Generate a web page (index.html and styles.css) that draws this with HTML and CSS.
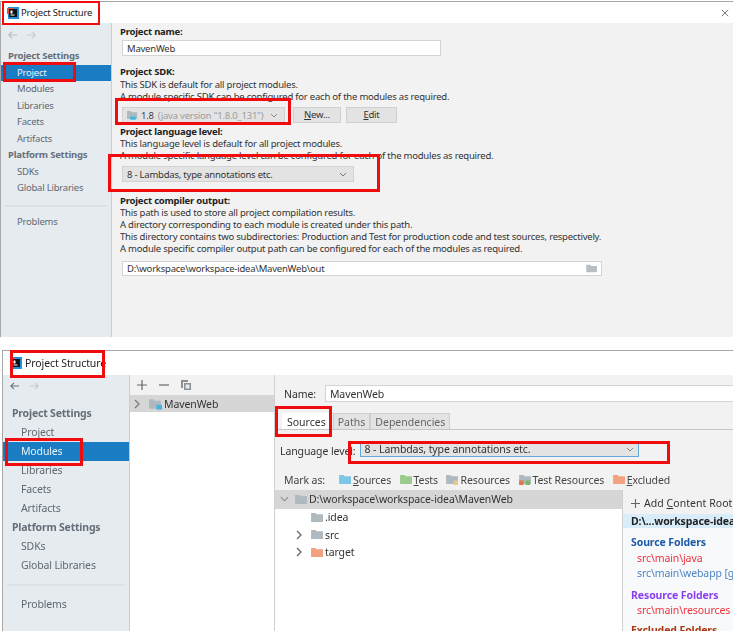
FILE: index.html
```html
<!DOCTYPE html>
<html lang="en">
<head>
<meta charset="utf-8">
<title>Project Structure</title>
<link rel="stylesheet" href="styles.css">
</head>
<body>
<div class="page">
  <section class="win win-a">
    <header class="titlebar">
      <svg class="logo" viewBox="0 0 12 12"><rect x="1" y="0" width="11" height="12" fill="#1f8fe0"/><rect x="0" y="1" width="6" height="6" fill="#e8503a"/><rect x="2" y="2" width="8" height="8" fill="#111"/><rect x="3.5" y="7.5" width="4" height="1" fill="#fff"/><rect x="3.5" y="3.5" width="2" height="3" fill="#fff"/></svg>
      <span class="title">Project Structure</span>
      <svg class="close" viewBox="0 0 10 10"><path d="M1 1l8 8M9 1l-8 8" stroke="#555" stroke-width="1" fill="none"/></svg>
    </header>
    <div class="body">
      <nav class="side">
        <div class="arrows">
          <svg viewBox="0 0 12 10"><path d="M11 5H2M5.500 1.500L2 5l3.500 3.500" stroke="#b9bec4" stroke-width="1.300" fill="none"/></svg>
          <svg viewBox="0 0 12 10"><path d="M1 5h9M6.500 1.500L10 5 6.500 8.500" stroke="#c9cdd2" stroke-width="1.300" fill="none"/></svg>
        </div>
        <div class="group">Project Settings</div>
        <div class="item sel">Project</div>
        <div class="item">Modules</div>
        <div class="item">Libraries</div>
        <div class="item">Facets</div>
        <div class="item">Artifacts</div>
        <div class="group">Platform Settings</div>
        <div class="item">SDKs</div>
        <div class="item">Global Libraries</div>
        <div class="sep"></div>
        <div class="item">Problems</div>
      </nav>
      <main class="form">
        <h4 class="h-name">Project name:</h4>
        <div class="field f-name">MavenWeb</div>
        <h4 class="h-sdk">Project SDK:</h4>
        <p>This SDK is default for all project modules.</p>
        <p>A module specific SDK can be configured for each of the modules as required.</p>
        <div class="sdk-row">
          <div class="combo c-sdk">
            <svg class="fld" viewBox="0 0 14 12"><path d="M0 1h5l1 1.500h7V11H0z" fill="#aeb9c0"/><rect x="4" y="8" width="7" height="4" fill="#40b6e0"/></svg>
            <b>1.8</b><span class="dim">(java version "1.8.0_131")</span>
            <svg class="chev" viewBox="0 0 8 5"><path d="M1 1l3 3 3-3" stroke="#888" fill="none"/></svg>
          </div>
          <div class="btn b-new"><u>N</u>ew...</div>
          <div class="btn b-edit"><u>E</u>dit</div>
        </div>
        <h4 class="h-lang">Project language level:</h4>
        <p>This language level is default for all project modules.</p>
        <p>A module specific language level can be configured for each of the modules as required.</p>
        <div class="combo c-lang">8 - Lambdas, type annotations etc.
          <svg class="chev" viewBox="0 0 8 5"><path d="M1 1l3 3 3-3" stroke="#777" fill="none"/></svg>
        </div>
        <h4 class="h-out">Project compiler output:</h4>
        <p>This path is used to store all project compilation results.</p>
        <p>A directory corresponding to each module is created under this path.</p>
        <p>This directory contains two subdirectories: Production and Test for production code and test sources, respectively.</p>
        <p>A module specific compiler output path can be configured for each of the modules as required.</p>
        <div class="field f-out">D:\workspace\workspace-idea\MavenWeb\out
          <svg class="open" viewBox="0 0 14 11"><path d="M0 1h5l1 1.500h7V10H0z" fill="#b9bec4"/></svg>
        </div>
      </main>
    </div>
  </section>

  <section class="win win-b">
    <header class="titlebar">
      <svg class="logo" viewBox="0 0 12 12"><rect x="1" y="0" width="11" height="12" fill="#1f8fe0"/><rect x="0" y="1" width="6" height="6" fill="#e8503a"/><rect x="2" y="2" width="8" height="8" fill="#111"/><rect x="3.500" y="7.500" width="4" height="1" fill="#fff"/><rect x="3.500" y="3.500" width="2" height="3" fill="#fff"/></svg>
      <span class="title">Project Structure</span>
    </header>
    <div class="body">
      <nav class="side">
        <div class="arrows">
          <svg viewBox="0 0 12 10"><path d="M11 5H2M5.500 1.500L2 5l3.500 3.500" stroke="#6e7378" stroke-width="1.200" fill="none"/></svg>
          <svg viewBox="0 0 12 10"><path d="M1 5h9M6.500 1.500L10 5 6.500 8.500" stroke="#c4c8cc" stroke-width="1.200" fill="none"/></svg>
        </div>
        <div class="group">Project Settings</div>
        <div class="item">Project</div>
        <div class="item sel">Modules</div>
        <div class="item">Libraries</div>
        <div class="item">Facets</div>
        <div class="item">Artifacts</div>
        <div class="group">Platform Settings</div>
        <div class="item">SDKs</div>
        <div class="item">Global Libraries</div>
        <div class="sep"></div>
        <div class="item">Problems</div>
      </nav>
      <aside class="mods">
        <div class="tools">
          <svg viewBox="0 0 10 10"><path d="M5 0v10M0 5h10" stroke="#666" stroke-width="1.200"/></svg>
          <svg viewBox="0 0 10 10"><path d="M0 5h10" stroke="#666" stroke-width="1.200"/></svg>
          <svg viewBox="0 0 10 10"><path d="M0 0h7v2H2v6H0z M3 3h7v7H3z" fill="#8b9095"/><rect x="4.500" y="4.500" width="4" height="4" fill="#e6ebf0"/></svg>
        </div>
        <div class="mod-row">
          <svg class="tw" viewBox="0 0 6 10"><path d="M1 1l4 4-4 4" stroke="#777" stroke-width="1.200" fill="none"/></svg>
          <svg class="fld" viewBox="0 0 14 12"><path d="M0 1h5l1 1.500h7V11H0z" fill="#aeb9c0"/><rect x="8" y="7" width="6" height="5" fill="#40b6e0"/></svg>
          <span>MavenWeb</span>
        </div>
      </aside>
      <main class="mod">
        <div class="name-row"><span>Name:</span><div class="field f-mod">MavenWeb</div></div>
        <div class="tabs">
          <div class="tab on">Sources</div>
          <div class="tab">Paths</div>
          <div class="tab">Dependencies</div>
        </div>
        <div class="lang-row"><span class="lang-label">Language level:</span>
          <div class="combo c-mod">8 - Lambdas, type annotations etc.
            <svg class="chev" viewBox="0 0 8 5"><path d="M1 1l3 3 3-3" stroke="#888" fill="none"/></svg>
          </div>
        </div>
        <div class="mark-row">
          <span class="mark-label">Mark as:</span>
          <span class="mk"><svg viewBox="0 0 14 12"><path d="M0 1h5l1 1.500h7V11H0z" fill="#7cc6e8"/></svg><span><u>S</u>ources</span></span>
          <span class="mk"><svg viewBox="0 0 14 12"><path d="M0 1h5l1 1.500h7V11H0z" fill="#9bcb8a"/></svg><span><u>T</u>ests</span></span>
          <span class="mk"><svg viewBox="0 0 14 12"><path d="M0 1h5l1 1.500h7V11H0z" fill="#aeb9c0"/><rect x="8" y="7" width="5" height="5" fill="#e9c98d"/></svg><span>Resources</span></span>
          <span class="mk"><svg viewBox="0 0 14 12"><path d="M0 1h5l1 1.500h7V11H0z" fill="#aeb9c0"/><rect x="0" y="7" width="5" height="5" fill="#e07a50"/><rect x="7" y="7" width="5" height="5" fill="#7db86a"/></svg><span>Test Resources</span></span>
          <span class="mk"><svg viewBox="0 0 14 12"><path d="M0 1h5l1 1.500h7V11H0z" fill="#f2a27c"/></svg><span><u>E</u>xcluded</span></span>
        </div>
        <div class="split">
          <div class="tree">
            <div class="t-row t-root">
              <svg class="tw" viewBox="0 0 10 6"><path d="M1 1l4 4 4-4" stroke="#888" stroke-width="1.200" fill="none"/></svg>
              <svg class="fld" viewBox="0 0 14 12"><path d="M0 1h5l1 1.500h7V11H0z" fill="#aeb9c0"/></svg>
              <span>D:\workspace\workspace-idea\MavenWeb</span>
            </div>
            <div class="t-row t-child">
              <span class="tw"></span>
              <svg class="fld" viewBox="0 0 14 12"><path d="M0 1h5l1 1.500h7V11H0z" fill="#aeb9c0"/></svg>
              <span>.idea</span>
            </div>
            <div class="t-row t-child">
              <svg class="tw" viewBox="0 0 6 10"><path d="M1 1l4 4-4 4" stroke="#666" stroke-width="1.300" fill="none"/></svg>
              <svg class="fld" viewBox="0 0 14 12"><path d="M0 1h5l1 1.500h7V11H0z" fill="#aeb9c0"/></svg>
              <span>src</span>
            </div>
            <div class="t-row t-child">
              <svg class="tw" viewBox="0 0 6 10"><path d="M1 1l4 4-4 4" stroke="#666" stroke-width="1.300" fill="none"/></svg>
              <svg class="fld" viewBox="0 0 14 12"><path d="M0 1h5l1 1.500h7V11H0z" fill="#f2a27c"/></svg>
              <span>target</span>
            </div>
          </div>
          <div class="roots">
            <div class="add"><svg viewBox="0 0 10 10"><path d="M5 0v10M0 5h10" stroke="#666" stroke-width="1.200"/></svg><span>Add <u>C</u>ontent Root</span></div>
            <div class="root-path">D:\...workspace-idea\MavenWeb</div>
            <div class="r-head r-src">Source Folders</div>
            <div class="r-item r-bad">src\main\java</div>
            <div class="r-item r-ok">src\main\webapp [generated]</div>
            <div class="r-head r-res">Resource Folders</div>
            <div class="r-item r-bad">src\main\resources</div>
            <div class="r-head r-exc">Excluded Folders</div>
          </div>
        </div>
      </main>
    </div>
  </section>

  <i class="mark m1"></i><i class="mark m2"></i><i class="mark m3"></i><i class="mark m4"></i>
  <i class="mark m5"></i><i class="mark m6"></i><i class="mark m7"></i><i class="mark m8"></i>
</div>
</body>
</html>
```
FILE: styles.css
```css
* { box-sizing: border-box; }
html, body { margin: 0; padding: 0; background: #fff; }
.page {
  position: relative;
  width: 733px;
  height: 631px;
  overflow: hidden;
  font-family: "Noto Sans", "Open Sans", sans-serif;
  color: #333;
  filter: blur(0.35px);
}
.win { display: flex; flex-direction: column; overflow: hidden; }
.win-a { height: 336px; border-top: 1px solid #a8a8a8; margin-top: 1px; border-left: 1px solid #a8a8a8; font-size: 9.5px; letter-spacing: -0.22px; }
.win-b { height: 281px; margin-top: 13px; margin-left: 2px; border-top: 1px solid #a8a8a8; border-left: 1px solid #a8a8a8; font-size: 10.5px; letter-spacing: -0.1px; }
.titlebar { display: flex; align-items: center; background: #fff; flex: none; }
.win-a .titlebar { height: 21px; padding-left: 6px; }
.win-b .titlebar { height: 24px; padding-left: 7px; }
.logo { width: 12px; height: 12px; flex: none; }
.title { color: #222; }
.win-a .title { margin-left: 2px; font-size: 9.5px; }
.win-b .title { margin-left: 3px; font-size: 10.5px; }
.close { width: 8px; height: 8px; margin-left: auto; margin-right: 4px; }
.body { display: flex; flex: 1; min-height: 0; background: #f2f2f2; }

.side { flex: none; background: #e6ebf0; border-right: 1px solid #c9ced2; color: #5f6972; }
.win-a .side { width: 111px; padding-top: 4px; }
.win-b .side { width: 127px; padding-top: 4px; }
.arrows { display: flex; }
.win-a .arrows { height: 13px; gap: 8px; padding: 3px 0 0 6px; }
.win-b .arrows { height: 16px; gap: 9px; padding: 2px 0 0 6px; }
.arrows svg { width: 11px; height: 10px; }
.group { font-weight: 700; color: #666f78; }
.item { color: #5f6972; }
.win-a .group { height: 16.500px; line-height: 16.500px; padding-left: 7px; }
.win-a .arrows + .group { margin-top: 8px; }
.win-a .item { height: 16.500px; line-height: 16.500px; padding-left: 16px; }
.win-b .group { height: 19px; line-height: 19px; padding-left: 9px; letter-spacing: -0.2px; }
.win-b .arrows + .group { margin-top: 9px; }
.win-b .item { height: 19px; line-height: 19px; padding-left: 18px; letter-spacing: -0.15px; }
.item.sel { background: #1a7dc4; color: #e6f1f9; }
.sep { border-top: 2px solid #dde1e5; }
.win-a .sep { margin: 8px 4px 7px; }
.win-b .sep { margin: 9px 4px 9px; }

.form { flex: 1; padding: 3px 0 0 8px; min-width: 0; }
h4 { margin: 0; font-size: inherit; font-weight: 700; color: #222; height: 12px; line-height: 12px; }
p { margin: 0; height: 12px; line-height: 12px; white-space: nowrap; color: #333; }
.h-sdk { margin-top: 10px; }
.h-sdk + p { margin-top: 1px; }
.h-lang { margin-top: 3px; }
.h-out { margin-top: 13px; }
.field { background: #fff; border: 1px solid #d4d4d4; display: flex; align-items: center; color: #333; }
.f-name { width: 319px; height: 16px; margin: 2px 0 0 2px; padding-left: 4px; }
.f-out { width: 480px; height: 15px; margin: 6px 0 0 2px; padding-left: 4px; position: relative; }
.open { width: 12px; height: 9px; margin-left: auto; margin-right: 3px; }
.combo { display: flex; align-items: center; background: #e3e3e3; border: 1px solid #d2d2d2; color: #333; }
.chev { width: 8px; height: 5px; margin-left: auto; flex: none; }
.sdk-row { display: flex; margin: 4px 0 0 2px; height: 16px; }
.c-sdk { width: 163px; padding: 0 6px 0 4px; }
.c-sdk .fld { width: 11px; height: 10px; margin-right: 3px; flex: none; }
.c-sdk b { font-weight: 400; margin-right: 4px; color: #444; }
.dim { color: #9b9b9b; }
.btn { height: 16px; line-height: 14px; background: #e3e3e3; border: 1px solid #cfcfcf; text-align: center; color: #333; }
.b-new { width: 48px; margin-left: 8px; }
.b-edit { width: 51px; margin-left: 5px; }
.c-lang { width: 232px; height: 16px; margin: 4px 0 0 2px; padding: 0 6px 0 4px; }

.mods { width: 145px; flex: none; background: #fff; border-right: 1px solid #d0d0d0; }
.tools { height: 20px; display: flex; align-items: center; gap: 12px; padding-left: 7px; background: #f2f2f2; }
.tools svg { width: 10px; height: 10px; }
.mod-row { height: 17px; display: flex; align-items: center; background: #d6d6d6; color: #333; padding-left: 4px; }
.mod-row .tw { width: 6px; height: 10px; }
.mod-row .fld { width: 13px; height: 12px; margin-left: 9px; margin-right: 2px; }

.mod { flex: 1; min-width: 0; display: flex; flex-direction: column; }
.name-row { display: flex; align-items: center; height: 17px; margin-top: 10px; padding-left: 9px; color: #333; }
.f-mod { flex: 1; height: 17px; margin-left: 9px; padding-left: 4px; border-right: 0; }
.tabs { display: flex; margin-top: 11px; height: 17px; padding-left: 7px; border-bottom: 1px solid #c6c6c6; letter-spacing: 0; }
.tab { padding: 0 4px; line-height: 16px; background: #e3e3e3; border: 1px solid #cfcfcf; border-bottom: 0; color: #666; }
.tab.on { background: #fff; color: #333; border-color: #fff; margin-right: 2px; }
.lang-row { display: flex; align-items: center; height: 16px; margin-top: 11px; padding-left: 5px; color: #333; }
.lang-label { padding-top: 4px; }
.c-mod { width: 279px; height: 16px; margin-left: 4px; padding: 0 4px; border-color: #62a8dc; }
.mark-row { display: flex; align-items: center; height: 15px; margin-top: 15px; padding-left: 9px; color: #444; }
.mark-label { margin-right: 14px; }
.mk { display: flex; align-items: center; margin-right: 8.5px; }
.mk svg { width: 13px; height: 11px; margin-right: 1px; flex: none; }
.split { display: flex; flex: 1; min-height: 0; margin-top: 3px; }
.tree { width: 348px; flex: none; background: #fff; border-right: 1px solid #d0d0d0; }
.t-row { display: flex; align-items: center; height: 17.500px; color: #333; }
.t-root { height: 18.500px; background: #d6d6d6; padding-left: 5px; }
.t-root .tw { width: 9px; height: 6px; }
.t-root .fld { width: 13px; height: 11px; margin-left: 6px; margin-right: 1px; }
.t-child { padding-left: 21px; }
.t-child .tw { width: 6px; height: 10px; }
.t-child .fld { width: 13px; height: 11px; margin-left: 9px; margin-right: 1px; }
.roots { flex: 1; background: #f7f9fb; min-width: 0; white-space: nowrap; overflow: hidden; }
.add { display: flex; align-items: center; height: 24px; padding: 2px 0 0 8px; background: #f2f2f2; color: #333; letter-spacing: 0.05px; }
.add svg { width: 9px; height: 9px; margin-right: 4px; flex: none; }
.root-path { height: 14px; line-height: 14px; padding-left: 8px; font-weight: 700; background: #d9ecf9; color: #222; }
.r-head { font-weight: 700; height: 16px; line-height: 15px; padding-left: 8px; margin-top: 7px; }
.r-src { color: #1f5aa6; }
.r-res { color: #8a3ff0; height: 15px; margin-top: 8px; }
.r-exc { color: #a8380f; margin-top: 5px; }
.r-item { height: 14.500px; line-height: 14.500px; padding-left: 14px; }
.r-bad { color: #f0323c; }
.r-ok { color: #4f86c4; }

.mark { position: absolute; display: block; border: 3px solid #f00c0c; }
.m1 { left: 2px; top: 1px; width: 98px; height: 24px; border-width: 2px; }
.m2 { left: 3px; top: 62px; width: 73px; height: 20px; }
.m3 { left: 115px; top: 98px; width: 176px; height: 27px; }
.m4 { left: 108px; top: 154px; width: 272px; height: 38px; }
.m5 { left: 10px; top: 350px; width: 95px; height: 28px; }
.m6 { left: 5px; top: 438px; width: 78px; height: 28px; }
.m7 { left: 275px; top: 406px; width: 57px; height: 31px; }
.m8 { left: 348px; top: 441px; width: 322px; height: 23px; }
```
